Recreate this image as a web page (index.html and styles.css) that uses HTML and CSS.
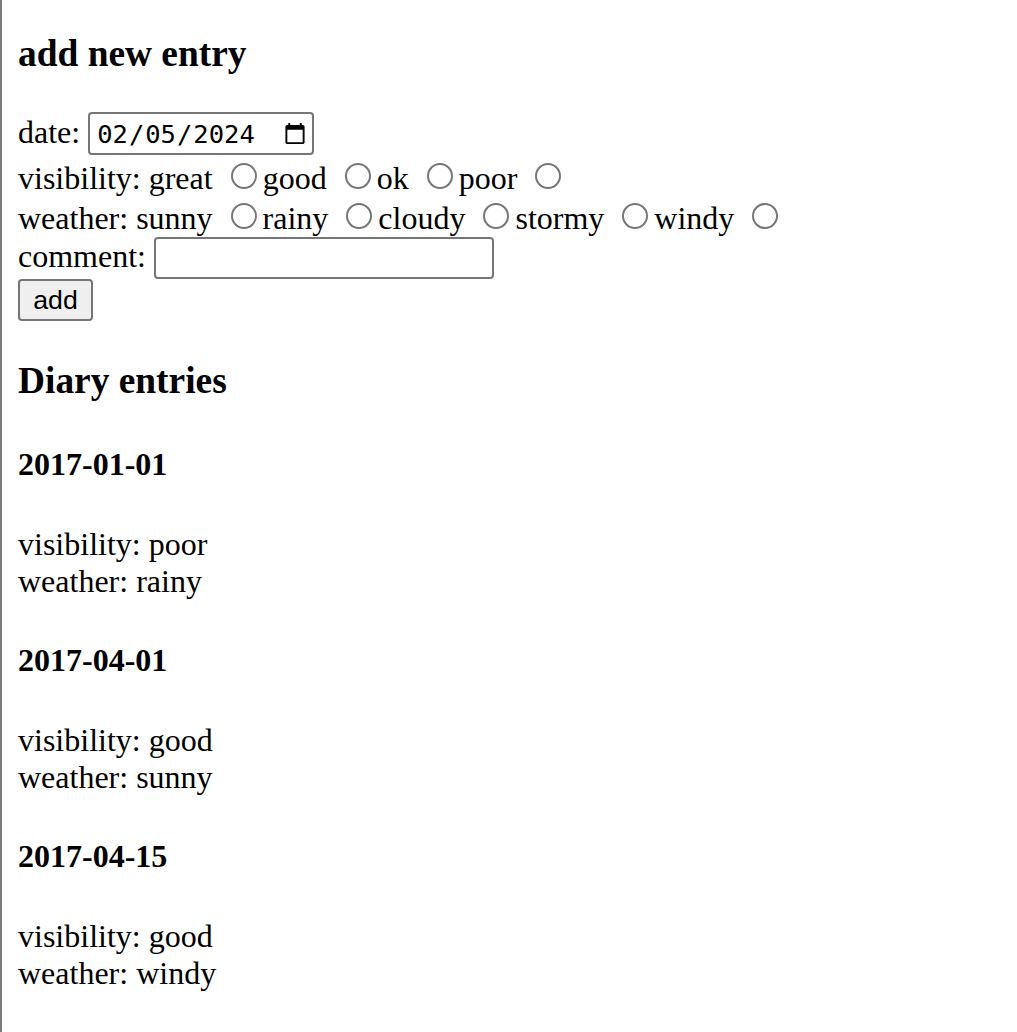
FILE: index.html
```html
<!DOCTYPE html>
<html>
<head>
<meta charset="utf-8">
<link rel="stylesheet" href="styles.css">
</head>
<body>
<div class="page">
  <h3 class="title first">add new entry</h3>
  <form class="form">
    <div class="row">date: <input class="date" type="date" value="2024-02-05"></div>
    <div class="row">visibility: great <input class="radio" type="radio" name="v">good <input class="radio" type="radio" name="v">ok <input class="radio" type="radio" name="v">poor <input class="radio" type="radio" name="v"></div>
    <div class="row">weather: sunny <input class="radio" type="radio" name="w">rainy <input class="radio" type="radio" name="w">cloudy <input class="radio" type="radio" name="w">stormy <input class="radio" type="radio" name="w">windy <input class="radio" type="radio" name="w"></div>
    <div class="row">comment: <input class="text" type="text"></div>
    <button class="btn" type="button">add</button>
  </form>
  <h3 class="title">Diary entries</h3>
  <div class="entry">
    <h4 class="entry-date">2017-01-01</h4>
    <p class="entry-body">visibility: poor<br>weather: rainy</p>
  </div>
  <div class="entry">
    <h4 class="entry-date">2017-04-01</h4>
    <p class="entry-body">visibility: good<br>weather: sunny</p>
  </div>
  <div class="entry">
    <h4 class="entry-date">2017-04-15</h4>
    <p class="entry-body">visibility: good<br>weather: windy</p>
  </div>
</div>
</body>
</html>
```
FILE: styles.css
```css
html, body {
  margin: 0;
  padding: 0;
  background: #fff;
}
.page {
  box-sizing: border-box;
  min-height: 100vh;
  border-left: 2px solid #7a7a7a;
  padding: 1px 16px 16px 16px;
  font-family: "Liberation Serif", "Times New Roman", serif;
  font-size: 32px;
  color: #000;
}
.title {
  font-size: 37.4px;
  font-weight: bold;
  margin: 37.4px 0 44.2px 0;
}
.title.first {
  margin-top: 31px;
  margin-bottom: 37.4px;
}
.form {
  margin: 0;
}
.row {
  line-height: normal;
}
.date {
  box-sizing: border-box;
  width: 226px;
  height: 43px;
  margin: 0 0 2px 0;
  padding: 2px 6px 2px 6px;
  border: 2px solid #767676;
  border-radius: 4px;
  font-family: "DejaVu Sans Mono", "Liberation Mono", monospace;
  font-size: 25.5px;
  color: #000;
  background: #fff;
}
.date::-webkit-calendar-picker-indicator {
  width: 24px;
  height: 24px;
  padding: 0;
  margin-left: 2px;
  margin-right: -1px;
}
.radio {
  appearance: none;
  -webkit-appearance: none;
  box-sizing: border-box;
  width: 26px;
  height: 26px;
  margin: 6px 6px 0 10px;
  border: 2px solid #767676;
  border-radius: 50%;
  background: #fff;
}
.text {
  box-sizing: border-box;
  width: 340px;
  height: 42px;
  margin: 0;
  padding: 2px 4px;
  border: 2px solid #767676;
  border-radius: 4px;
  font-family: "Liberation Sans", Arial, sans-serif;
  font-size: 26.7px;
  background: #fff;
}
.btn {
  box-sizing: border-box;
  width: 75px;
  height: 42px;
  margin: 0;
  padding: 0;
  border: 2px solid #767676;
  border-radius: 4px;
  background: #efefef;
  font-family: "Liberation Sans", Arial, sans-serif;
  font-size: 26.7px;
  color: #000;
}
.entry-date {
  font-size: 32px;
  font-weight: bold;
  margin: 42.6px 0;
}
.entry-body {
  margin: 42.6px 0;
}
```
